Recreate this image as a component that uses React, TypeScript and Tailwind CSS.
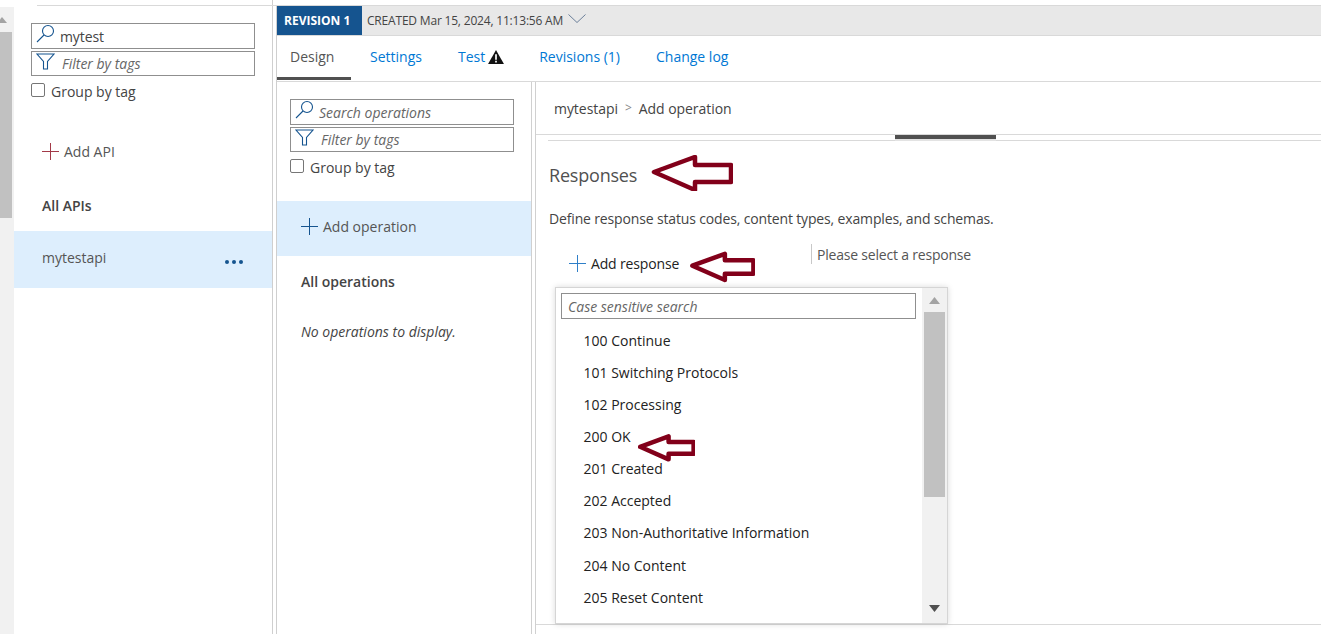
const font = "[font-family:'Open_Sans','Noto_Sans',sans-serif]";

const statusCodes = [
  '100 Continue',
  '101 Switching Protocols',
  '102 Processing',
  '200 OK',
  '201 Created',
  '202 Accepted',
  '203 Non-Authoritative Information',
  '204 No Content',
  '205 Reset Content',
];

const Plus = ({ color = '#15548f' }: { color?: string }) => (
  <svg width="17" height="17" viewBox="0 0 17 17" fill="none" stroke={color} strokeWidth="1">
    <path d="M8.5 0v17M0 8.5h17" />
  </svg>
);

const Funnel = () => (
  <svg className="mt-[1px] mr-[2px] self-start" width="19" height="17" viewBox="0 0 19 17" fill="none" stroke="#15548f" strokeWidth="1.1">
    <path d="M1 1h17l-6.5 7.5V16h-4V8.5z" />
  </svg>
);

const Magnifier = () => (
  <svg className="self-start" width="19" height="19" viewBox="0 0 19 19" fill="none" stroke="#15548f" strokeWidth="1.1">
    <circle cx="12" cy="7" r="5.5" />
    <path d="M8 11L1 18" />
  </svg>
);

const Arrow = ({ className, width, height }: { className: string; width: number; height: number }) => (
  <svg className={className} width={width} height={height} viewBox="0 0 82 36" fill="none">
    <path
      d="M3 17L44 2v8h36v17H44v8z"
      stroke="#82001a"
      strokeWidth="4.5"
      strokeLinejoin="round"
      vectorEffect="non-scaling-stroke"
    />
  </svg>
);

const FilterBox = ({ icon, text, dark, tall }: { icon: React.ReactNode; text: string; dark?: boolean; tall?: boolean }) => (
  <div
    className={`flex w-[224px] items-center gap-[5px] border border-[#8f8f8f] pl-[4px] text-[14px] ${tall ? 'h-[26px]' : 'h-[25px]'}`}
  >
    {icon}
    <span className={dark ? 'tracking-[-0.1px] text-[#444]' : 'text-[#666] italic'}>{text}</span>
  </div>
);

const GroupByTag = () => (
  <label className="mt-[3px] flex items-center gap-[6px] text-[14px] text-[#444]">
    <span className="-mt-[4px] h-[14px] w-[14px] rounded-[2px] border border-[#767676] bg-white" />
    Group by tag
  </label>
);

const ApiPanel = () => (
  <aside className="flex w-[258px] shrink-0 flex-col">
    <div className="flex flex-col gap-[2px] pt-[23px] pl-[17px]">
      <FilterBox icon={<Magnifier />} text="mytest" dark tall />
      <FilterBox icon={<Funnel />} text="Filter by tags" />
      <GroupByTag />
    </div>
    <div className="mt-[39px] flex items-center gap-[5px] pl-[28px] text-[14px] text-[#555]">
      <Plus color="#a33a48" />
      Add API
    </div>
    <div className="mt-[33px] pl-[28px] text-[14px] font-semibold text-[#444]">All APIs</div>
    <div className="mt-[15px] flex h-[57px] items-center justify-between bg-[#ddeefd] pr-[29px] pl-[28px] text-[14px] text-[#555]">
      <span className="-mt-[5px]">mytestapi</span>
      <span className="mt-[5px] flex gap-[3px]">
        <i className="h-[4px] w-[4px] rounded-full bg-[#15548f]" />
        <i className="h-[4px] w-[4px] rounded-full bg-[#15548f]" />
        <i className="h-[4px] w-[4px] rounded-full bg-[#15548f]" />
      </span>
    </div>
  </aside>
);

const OperationsPanel = () => (
  <section className="flex w-[255px] shrink-0 flex-col border-r border-[#d0d0d0]">
    <div className="flex flex-col gap-[2px] pt-[17px] pl-[13px]">
      <FilterBox icon={<Magnifier />} text="Search operations" tall />
      <FilterBox icon={<Funnel />} text="Filter by tags" />
      <GroupByTag />
    </div>
    <div className="mt-[23px] flex h-[55px] items-center gap-[5px] bg-[#ddeefd] pb-[5px] pl-[24px] text-[14px] text-[#555]">
      <Plus />
      Add operation
    </div>
    <div className="mt-[15px] pl-[24px] text-[14px] font-semibold text-[#444]">All operations</div>
    <div className="mt-[29px] pl-[24px] text-[14px] text-[#444] italic">No operations to display.</div>
  </section>
);

const ResponseDropdown = () => (
  <div className="absolute top-[287px] left-[555px] flex h-[337px] w-[393px] border border-[#d5d5d5] bg-white shadow-[0_0_6px_rgba(0,0,0,0.15)]">
    <div className="flex flex-1 flex-col">
      <div className="mt-[5px] ml-[5px] flex h-[26px] w-[355px] items-center border border-[#8f8f8f] pl-[6px] text-[14px] text-[#666] italic">
        Case sensitive search
      </div>
      <ul className="mt-[5px] flex flex-col text-[14px] text-[#222]">
        {statusCodes.map((code) => (
          <li key={code} className="flex h-[32.15px] items-center pl-[27.5px]">
            {code}
          </li>
        ))}
      </ul>
    </div>
    <div className="flex w-[25px] flex-col items-center bg-[#f1f1f1]">
      <svg className="mt-[9px]" width="11" height="7" viewBox="0 0 11 7">
        <path d="M0 7L5.5 0L11 7z" fill="#a3a3a3" />
      </svg>
      <div className="mt-[8px] h-[185px] w-[21px] bg-[#c1c1c1]" />
      <svg className="mt-[108px]" width="11" height="7" viewBox="0 0 11 7">
        <path d="M0 0L5.5 7L11 0z" fill="#505050" />
      </svg>
    </div>
  </div>
);

export default function App() {
  return (
    <div className={`${font} relative flex h-[634px] w-[1321px] overflow-hidden bg-white`}>
      <div className="mt-[7px] flex w-[14px] shrink-0 flex-col bg-[#f1f1f1]">
        <svg className="mt-[10px] -ml-[3px]" width="10" height="6" viewBox="0 0 10 6">
          <path d="M0 6L5 0L10 6z" fill="#a3a3a3" />
        </svg>
        <div className="mt-[9px] h-[186px] w-[12px] bg-[#c1c1c1]" />
      </div>
      <div className="absolute top-[5px] left-[37px] h-px w-[1284px] bg-[#d9d9d9]" />

      <ApiPanel />

      <main className="flex flex-1 flex-col border-l border-[#cfcfcf] pl-[3px]">
        <div className="mt-[6px] flex flex-1 flex-col border-l border-[#cfcfcf]">
          <div className="flex h-[30px] shrink-0 items-center border-b border-[#d9d9d9] bg-[#e8e8e8]">
            <div className="flex h-[29px] w-[85px] items-center bg-[#15548f] pl-[7px] text-[12px] font-bold text-white">
              REVISION 1
            </div>
            <span className="ml-[5px] text-[12px] tracking-[-0.19px] text-[#444]">CREATED Mar 15, 2024, 11:13:56 AM</span>
            <svg className="mt-[-4px] ml-[5px]" width="18" height="9" viewBox="0 0 18 9" fill="none" stroke="#6b7f99">
              <path d="M0.5 0.5L9 8.5L17.5 0.5" />
            </svg>
          </div>

          <nav className="flex h-[46px] shrink-0 items-start border-b border-[#d9d9d9] text-[14px] text-[#0078d4]">
            <div className="flex h-[44px] w-[74px] items-center border-b-[3px] border-[#505050] pl-[13px] text-[#555]">
              Design
            </div>
            <div className="ml-[19px] flex h-[44px] items-center pb-[3px]">Settings</div>
            <div className="ml-[36px] flex h-[44px] items-center gap-[3px] pb-[3px]">
              Test
              <svg width="16" height="14" viewBox="0 0 17 15">
                <path d="M8.5 0L17 15H0z" fill="#111" />
                <path d="M7.6 4.5h1.8v6H7.6zM7.6 11.5h1.8v1.8H7.6z" fill="#fff" />
              </svg>
            </div>
            <div className="ml-[35px] flex h-[44px] items-center pb-[3px]">Revisions (1)</div>
            <div className="ml-[36px] flex h-[44px] items-center pb-[3px]">Change log</div>
          </nav>

          <div className="flex flex-1">
            <OperationsPanel />
            <div className="ml-[3px] flex flex-1 flex-col border-l border-[#d0d0d0]">
              <div className="flex h-[53px] shrink-0 items-center gap-[7px] border-b border-[#d9d9d9] pl-[18px] text-[14px] tracking-[-0.05px] text-[#444]">
                mytestapi
                <span className="text-[12px] text-[#888]">&gt;</span>
                Add operation
              </div>
              <div className="relative ml-[12px] h-[6px] shrink-0 border-b border-[#d9d9d9]">
                <div className="absolute top-0 left-[347px] h-[6px] w-[101px] border-t-[4px] border-[#505050] bg-[#e3e3e3]" />
              </div>
              <div className="pl-[13px]">
                <h2 className="mt-[22px] text-[18px] leading-[24px] tracking-[-0.2px] text-[#505050]">Responses</h2>
                <p className="mt-[21px] text-[14px] tracking-[-0.15px] text-[#444]">
                  Define response status codes, content types, examples, and schemas.
                </p>
                <div className="mt-[15px] flex items-start">
                  <div className="mt-[9px] ml-[20px] flex w-[242px] items-center gap-[5px] text-[14px] tracking-[-0.15px] text-[#222]">
                    <Plus color="#2f7fc8" />
                    Add response
                  </div>
                  <div className="flex h-[20px] items-center border-l border-[#c8c8c8] pl-[5px] text-[14px] tracking-[-0.2px] text-[#555]">
                    Please select a response
                  </div>
                </div>
              </div>
              <div className="mt-auto mb-[9px] h-px bg-[#d9d9d9]" />
            </div>
          </div>
        </div>
      </main>

      <ResponseDropdown />
      <Arrow className="absolute top-[155px] left-[651px]" width={82} height={36} />
      <Arrow className="absolute top-[250px] left-[690px]" width={65} height={33} />
      <Arrow className="absolute top-[431px] left-[638px]" width={57} height={33} />
    </div>
  );
}
